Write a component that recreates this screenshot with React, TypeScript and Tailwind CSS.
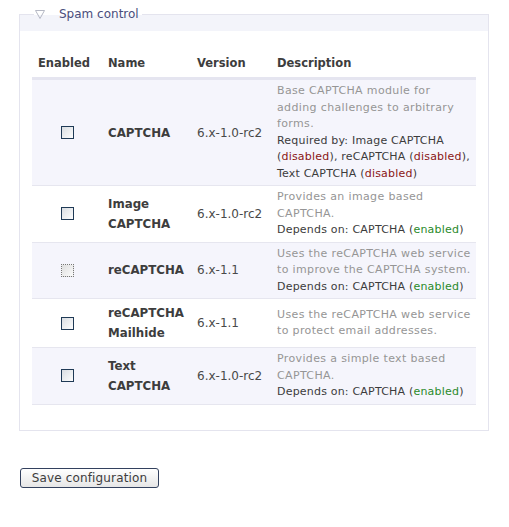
const font = { fontFamily: '"DejaVu Sans", Verdana, sans-serif' };

type Dep = { label: string; items: { name: string; state: 'enabled' | 'disabled' }[] };

const rows: {
  name: string[];
  version: string;
  desc: string;
  dep?: Dep;
  dotted?: boolean;
}[] = [
  {
    name: ['CAPTCHA'],
    version: '6.x-1.0-rc2',
    desc: 'Base CAPTCHA module for adding challenges to arbitrary forms.',
    dep: {
      label: 'Required by:',
      items: [
        { name: 'Image CAPTCHA', state: 'disabled' },
        { name: 'reCAPTCHA', state: 'disabled' },
        { name: 'Text CAPTCHA', state: 'disabled' },
      ],
    },
  },
  {
    name: ['Image', 'CAPTCHA'],
    version: '6.x-1.0-rc2',
    desc: 'Provides an image based CAPTCHA.',
    dep: { label: 'Depends on:', items: [{ name: 'CAPTCHA', state: 'enabled' }] },
  },
  {
    name: ['reCAPTCHA'],
    version: '6.x-1.1',
    desc: 'Uses the reCAPTCHA web service to improve the CAPTCHA system.',
    dep: { label: 'Depends on:', items: [{ name: 'CAPTCHA', state: 'enabled' }] },
    dotted: true,
  },
  {
    name: ['reCAPTCHA', 'Mailhide'],
    version: '6.x-1.1',
    desc: 'Uses the reCAPTCHA web service to protect email addresses.',
  },
  {
    name: ['Text', 'CAPTCHA'],
    version: '6.x-1.0-rc2',
    desc: 'Provides a simple text based CAPTCHA.',
    dep: { label: 'Depends on:', items: [{ name: 'CAPTCHA', state: 'enabled' }] },
  },
];

function Checkbox({ dotted }: { dotted?: boolean }) {
  return (
    <div
      className={
        dotted
          ? 'mx-auto h-[13px] w-[13px] border border-dotted border-[#777] bg-gradient-to-br from-[#dedede] to-[#fbfbfb]'
          : 'mx-auto h-[13px] w-[13px] border border-[#1f3a56] bg-gradient-to-br from-[#d9dde2] to-[#fdfdfd]'
      }
    />
  );
}

export default function App() {
  return (
    <div className="min-h-[527px] w-[509px] bg-white pt-[4px] text-[12px] text-[#494949]" style={font}>
      <fieldset className="ml-[19px] w-[470px] border border-[#e4e4ee] bg-white">
        <legend className="ml-[14px] flex items-center pl-[1px] pr-[3px] leading-[20px] text-[#4a4d7c]">
          <svg width="10" height="9" viewBox="0 0 10 9" className="mr-[14px]">
            <polygon points="0.5,0.5 9.5,0.5 5,8.5" fill="none" stroke="#b5b8c4" strokeWidth="1" />
          </svg>
          Spam control
        </legend>
        <div className="-mt-[9px] h-[16px] bg-[#f3f4fa]" />
        <div className="px-[12px] pb-[25px] pt-[18px]">
          <table className="w-[444px] table-fixed border-collapse">
            <colgroup>
              <col className="w-[70px]" />
              <col className="w-[89px]" />
              <col className="w-[80px]" />
              <col />
            </colgroup>
            <thead>
              <tr className="border-b-[3px] border-[#e5e5f0] text-left text-[11.5px] font-bold text-[#3d3d3d]">
                <th className="px-[6px] py-[4px] leading-[20px]">Enabled</th>
                <th className="px-[6px] py-[4px] leading-[20px]">Name</th>
                <th className="px-[6px] py-[4px] leading-[20px]">Version</th>
                <th className="px-[6px] py-[4px] leading-[20px]">Description</th>
              </tr>
            </thead>
            <tbody>
              {rows.map((r, i) => (
                <tr
                  key={i}
                  className={
                    i % 2 === 0
                      ? 'border-b border-[#e6e6ef] bg-[#f5f5fc] align-middle'
                      : 'border-b border-[#e6e6ef] bg-white align-middle'
                  }
                >
                  <td className="px-[6px] py-[3px]">
                    <Checkbox dotted={r.dotted} />
                  </td>
                  <td className="px-[6px] py-[4px] text-[11.8px] font-bold leading-[20px] text-[#3d3d3d]">
                    {r.name.map((n) => (
                      <div key={n}>{n}</div>
                    ))}
                  </td>
                  <td className="whitespace-nowrap px-[6px] py-[3px] leading-[20px]">{r.version}</td>
                  <td className="py-[3px] pl-[6px] pr-[5px] text-[11px] leading-[16.5px]">
                    <div className="tracking-[0.36px] text-[#959595]">{r.desc}</div>
                    {r.dep && (
                      <div className="tracking-[0.2px] text-[#3c3c3c]">
                        {r.dep.label}{' '}
                        {r.dep.items.map((it, j) => (
                          <span key={it.name}>
                            {it.name} (
                            <span className={it.state === 'enabled' ? 'text-[#2a8a2a]' : 'text-[#8a1515]'}>
                              {it.state}
                            </span>
                            ){j < r.dep!.items.length - 1 ? ', ' : ''}
                          </span>
                        ))}
                      </div>
                    )}
                  </td>
                </tr>
              ))}
            </tbody>
          </table>
        </div>
      </fieldset>
      <button className="ml-[20px] mt-[37px] h-[20px] w-[139px] rounded-[3px] border border-[#33415e] bg-gradient-to-b from-white to-[#e6e6e6] text-[12px] leading-[18px] tracking-[0.15px] text-[#3d3d3d]">
        Save configuration
      </button>
    </div>
  );
}
